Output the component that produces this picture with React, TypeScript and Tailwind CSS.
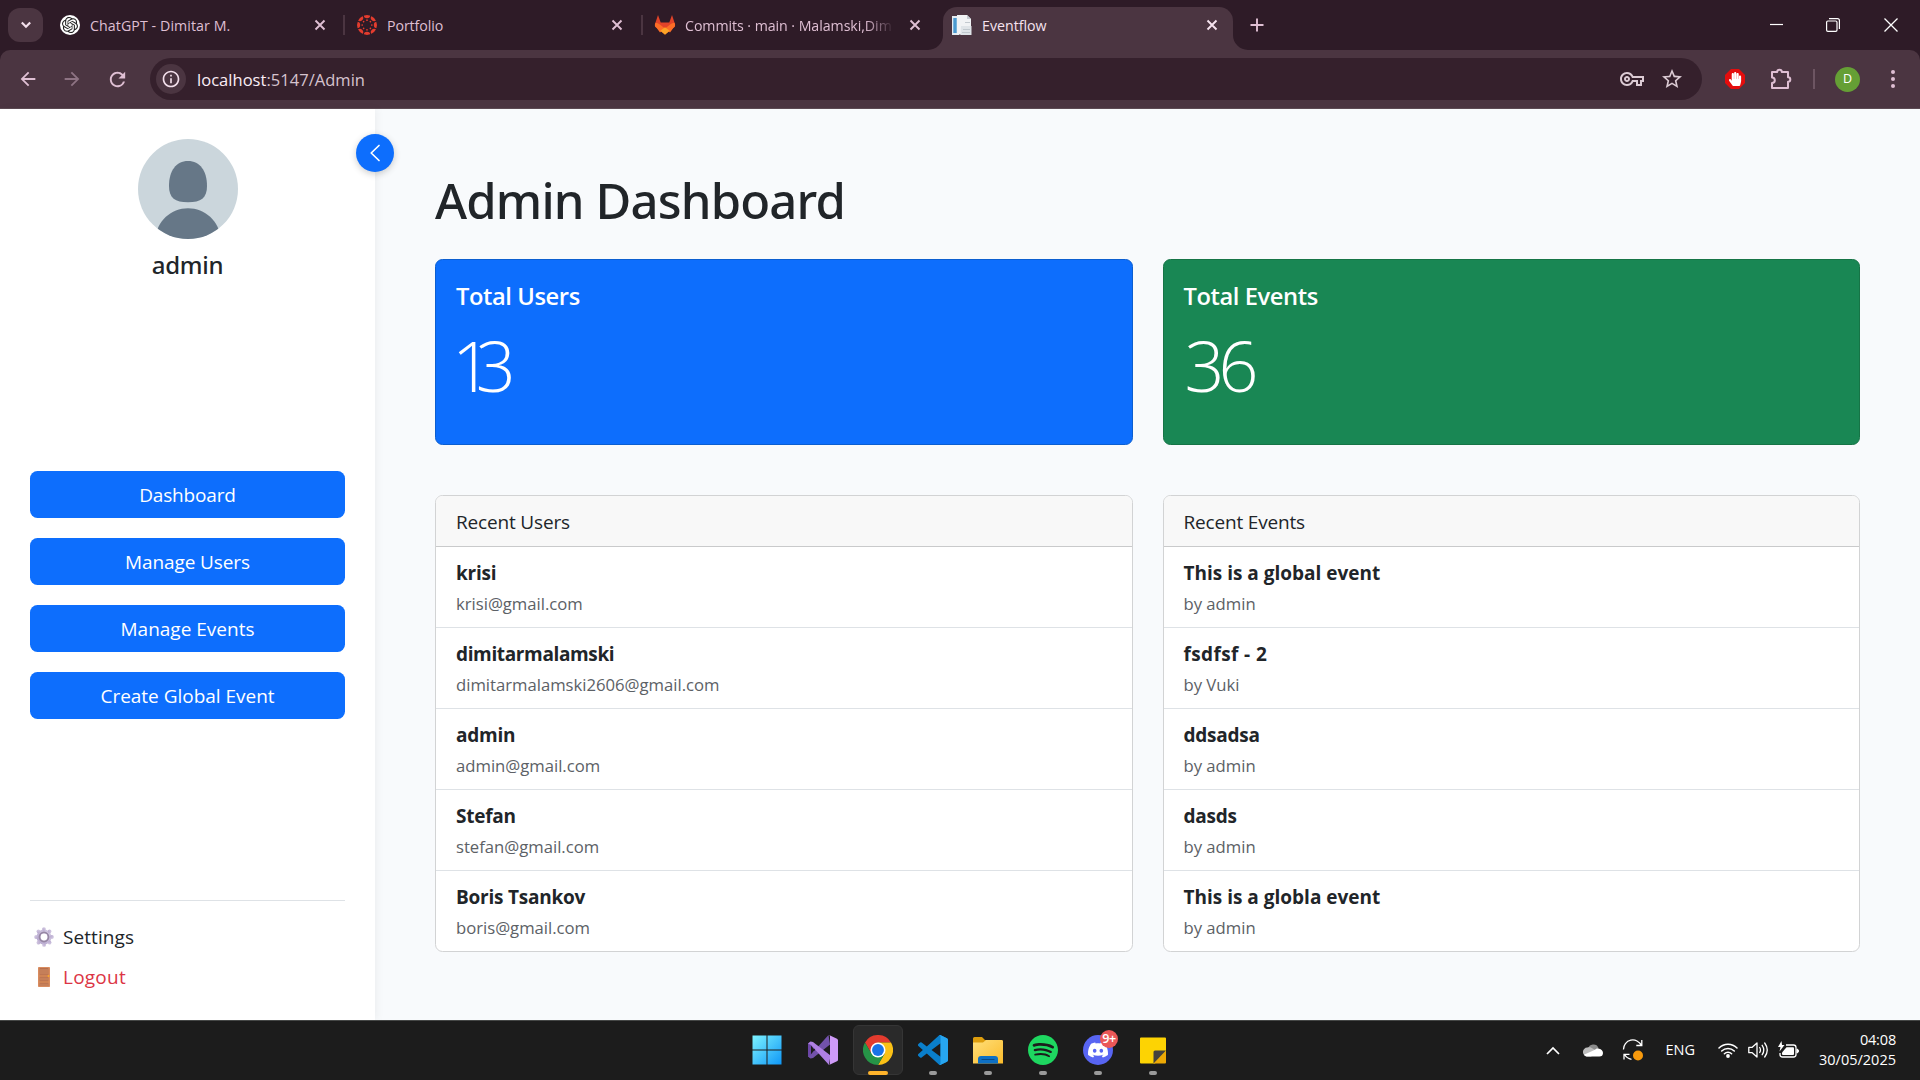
import React from "react";
import { SiOpenai, SiSpotify, SiDiscord } from "react-icons/si";
import { MdArrowBack, MdArrowForward, MdRefresh, MdInfoOutline, MdStarBorder, MdOutlineVpnKey } from "react-icons/md";
import { FaHandPaper } from "react-icons/fa";

/* ---------- Favicons ---------- */

function CanvasIcon() {
  const angles = [0, 45, 90, 135, 180, 225, 270, 315];
  return (
    <svg width="20" height="20" viewBox="0 0 20 20">
      <defs>
        <clipPath id="ring"><circle cx="10" cy="10" r="10" /></clipPath>
      </defs>
      <g fill="#e43c2e" clipPath="url(#ring)">
        {angles.map((a) => (
          <g key={a} transform={`rotate(${a} 10 10)`}>
            <circle cx="10" cy="0" r="3.2" />
            <circle cx="10" cy="5.2" r="0.85" />
          </g>
        ))}
      </g>
    </svg>
  );
}

function GitlabIcon() {
  return (
    <svg width="22" height="22" viewBox="0 0 22 22">
      <path d="M4 1 1.2 9.5a3.6 3.6 0 0 0 1.3 4.3L11 20.5l8.500-6.700a3.600 3.600 0 0 0 1.300-4.300L18 1l-2.700 7.500H6.700Z" fill="#e24329" />
      <path d="M20.500 8.800c-2 .2-3.600 1.200-5 2.300L11 14.500l5 3.900 3.500-4.600a3.600 3.600 0 0 0 1.300-4.300Z" fill="#fc6d26" />
      <path d="M1.500 8.800c2 .2 3.600 1.200 5 2.300L11 14.500l-5 3.900-3.500-4.600a3.600 3.600 0 0 1-1.300-4.300Z" fill="#fc6d26" />
      <path d="m6.300 16.800 4.700-3.600 4.700 3.600-4.700 3.900Z" fill="#fca326" />
    </svg>
  );
}

function EventflowIcon() {
  return (
    <svg width="20" height="20" viewBox="0 0 20 20">
      <rect x="0" y="1" width="7" height="19" fill="#e4ecf2" />
      <rect x="1.300" y="3" width="3.400" height="15" fill="#4b9ad0" />
      <path d="M5 0h10l4 4v15.500H5Z" fill="#f1f3f5" />
      <path d="M15 0l4 4h-4Z" fill="#c5ccd3" />
      <path d="M9 11h10.500v9H8.500Z" fill="#dfe4e8" />
      <path d="M11 14.500h7M10 17.500h8M13 7.500h5" stroke="#bcc4cb" strokeWidth="0.900" />
    </svg>
  );
}

/* ---------- Browser tabs ---------- */

function CloseX({ color }: { color: string }) {
  return (
    <svg width="12" height="12" viewBox="0 0 12 12" className="shrink-0">
      <path d="M1.500 1.500l9 9M10.500 1.500l-9 9" stroke={color} strokeWidth="1.900" />
    </svg>
  );
}

function TabStrip() {
  return (
    <div className="flex h-[50px] bg-[#2e1b27] text-[14.2px] leading-5 text-[#dfbfd3]">
      <div className="mt-2 ml-2 flex h-[34px] w-[35px] items-center justify-center rounded-xl bg-[#4b3541]">
        <svg width="12" height="8" viewBox="0 0 12 8"><path d="M1.800 1.500 6 5.700l4.200-4.200" fill="none" stroke="#f3dfeb" strokeWidth="2.200" /></svg>
      </div>
      <div className="ml-[17px] flex h-[50px] w-[285px] items-center">
        <div className="flex size-5 items-center justify-center rounded-full bg-white"><SiOpenai size={16} color="#222" /></div>
        <span className="ml-[10px] flex-1 pt-[2px] tracking-[0.006em]">ChatGPT - Dimitar M.</span>
        <CloseX color="#dfbfd3" />
        <div className="ml-[17px] h-5 w-[2px] bg-[#4b3541]" />
      </div>
      <div className="ml-[12px] flex h-[50px] w-[286px] items-center">
        <CanvasIcon />
        <span className="ml-[10px] flex-1 pt-[2px] tracking-[-0.006em]">Portfolio</span>
        <CloseX color="#dfbfd3" />
        <div className="ml-[18px] h-5 w-[2px] bg-[#4b3541]" />
      </div>
      <div className="ml-[11px] flex h-[50px] w-[289px] items-center">
        <GitlabIcon />
        <div className="ml-[9px] w-[209px] overflow-hidden pt-[2px] whitespace-nowrap tracking-[-0.004em] [mask-image:linear-gradient(to_right,black_86%,transparent)]">
          Commits · main · Malamski,Dim
        </div>
        <div className="ml-[15px] flex"><CloseX color="#dfbfd3" /></div>
      </div>
      <div className="-ml-[15px] flex h-[50px] items-end">
        <svg width="15" height="15" viewBox="0 0 15 15"><path d="M15 0v15H0A15 15 0 0 0 15 0Z" fill="#4b3541" /></svg>
        <div className="flex h-[43px] w-[290px] items-center rounded-t-[14px] bg-[#4b3541] pb-[7px] pl-[9px] text-[#f6e3ef]">
          <EventflowIcon />
          <span className="ml-[10px] w-[224px] pt-[2px]">Eventflow</span>
          <CloseX color="#f6e3ef" />
        </div>
        <svg width="15" height="15" viewBox="0 0 15 15"><path d="M0 0v15h15A15 15 0 0 1 0 0Z" fill="#4b3541" /></svg>
      </div>
      <div className="ml-[2px] flex h-[50px] items-center">
        <svg width="14" height="14" viewBox="0 0 14 14"><path d="M7 .5v13M.5 7h13" stroke="#dfbfd3" strokeWidth="1.900" /></svg>
      </div>
      <div className="ml-auto flex h-[50px] items-center pr-[22px]">
        <svg width="13" height="13" viewBox="0 0 13 13"><path d="M0 5.500h13" stroke="#fff" strokeWidth="1.200" /></svg>
        <svg width="14" height="14" viewBox="0 0 14 14" className="ml-[43px]">
          <rect x="0.600" y="3" width="10.400" height="10.400" rx="1.300" fill="none" stroke="#fff" strokeWidth="1.200" />
          <path d="M3 .7h8.500a1.900 1.900 0 0 1 1.900 1.900V11" fill="none" stroke="#fff" strokeWidth="1.200" />
        </svg>
        <svg width="14" height="14" viewBox="0 0 14 14" className="ml-[44px]"><path d="M.5.5l13 13M13.500.5l-13 13" stroke="#fff" strokeWidth="1.300" /></svg>
      </div>
    </div>
  );
}

function Toolbar() {
  return (
    <div className="bg-[#2e1b27]">
      <div className="flex h-[59px] items-center rounded-t-[10px] border-b border-[#5c4a53] bg-[#4b3541] text-[#dfbfd3]">
        <MdArrowBack size={22} className="ml-[17px]" />
        <MdArrowForward size={22} className="ml-[22px] opacity-45" />
        <MdRefresh size={23} className="ml-[23px]" />
        <div className="ml-[21px] flex h-[42px] w-[1552px] items-center rounded-full bg-[#35202c] pl-[6px]">
          <div className="flex size-[30px] items-center justify-center rounded-full bg-[#4b3541]">
            <MdInfoOutline size={20} color="#f3dfeb" />
          </div>
          <span className="ml-[11px] pt-px text-[16.5px] leading-6 tracking-[0.002em] text-[#d6c3ce]">
            <span className="text-[#fbeef6]">localhost</span>:5147/Admin
          </span>
          <div className="ml-auto flex items-center pr-[18px] text-[#dccbd4]">
            <MdOutlineVpnKey size={24} />
            <MdStarBorder size={24} className="ml-[16px]" />
          </div>
        </div>
        <div className="ml-[23px] flex size-5 items-center justify-center bg-[#e40d0d] [clip-path:polygon(30%_0,70%_0,100%_30%,100%_70%,70%_100%,30%_100%,0_70%,0_30%)]">
          <FaHandPaper size={14} color="#fff" />
        </div>
        <svg width="22" height="22" viewBox="0 0 22 22" className="ml-[25px]">
          <path d="M2 4h5.200a2.300 2.300 0 0 1 4.600 0H18v5.200a2.300 2.300 0 0 1 0 4.600V20H2v-5a2.800 2.800 0 0 0 0-5.600Z" fill="none" stroke="#dfbfd3" strokeWidth="2" strokeLinejoin="round" />
        </svg>
        <div className="ml-[21px] h-5 w-[2px] bg-[#6d5562]" />
        <div className="ml-[20px] flex size-[25px] items-center justify-center rounded-full bg-[#659f35] text-[12.5px] leading-none text-white">D</div>
        <svg width="4" height="18" viewBox="0 0 4 18" className="ml-[31px]" fill="#dfbfd3">
          <circle cx="2" cy="2" r="2" /><circle cx="2" cy="9" r="2" /><circle cx="2" cy="16" r="2" />
        </svg>
      </div>
    </div>
  );
}

/* ---------- Sidebar ---------- */

function Avatar() {
  return (
    <svg width="100" height="100" viewBox="0 0 100 100">
      <defs><clipPath id="face"><circle cx="50" cy="50" r="50" /></clipPath></defs>
      <g clipPath="url(#face)">
        <rect width="100" height="100" fill="#cbd6dc" />
        <path d="M50 22C62 22 69 32 69 47C69 59 63 63.300 50 63.300S31 59 31 47C31 32 38 22 50 22Z" fill="#667787" />
        <path d="M17 100C19 82 33 69.300 50 69.300S81 82 83 100Z" fill="#667787" />
      </g>
    </svg>
  );
}

function GearIcon() {
  return (
    <svg width="20" height="20" viewBox="0 0 20 20">
      <defs>
        <linearGradient id="gear" x1="1" y1="0" x2="0" y2="1"><stop offset="0" stopColor="#d9d0e6" /><stop offset="1" stopColor="#b3a3cb" /></linearGradient>
      </defs>
      <g fill="url(#gear)">
        <circle cx="10" cy="10" r="7.500" />
        {[0, 45, 90, 135, 180, 225, 270, 315].map((a) => (
          <circle key={a} cx="10" cy="2.100" r="1.900" transform={`rotate(${a} 10 10)`} />
        ))}
      </g>
      <circle cx="10" cy="10" r="4.400" fill="none" stroke="#9787a5" strokeWidth="2" />
      <circle cx="10" cy="10" r="3.400" fill="#fff" />
    </svg>
  );
}

function DoorIcon() {
  return (
    <svg width="12" height="20" viewBox="0 0 12 20">
      <rect width="12" height="20" rx="0.800" fill="#d98c5f" />
      <rect x="1.200" y="1" width="9.600" height="18" fill="#c57f59" />
      <path d="M2 1.500h8M2 8h8M2 10h8M2 14h8M2 16h8" stroke="#b46a49" strokeWidth="0.800" />
      <path d="M1 9h10M1 15h10" stroke="#e08f56" strokeWidth="1.100" />
      <circle cx="10.500" cy="9" r="0.900" fill="#f9a825" />
    </svg>
  );
}

function Sidebar() {
  const items = [
    { label: "Dashboard", track: "tracking-[-0.008em]" },
    { label: "Manage Users", track: "tracking-[-0.005em]" },
    { label: "Manage Events", track: "tracking-normal" },
    { label: "Create Global Event", track: "tracking-[-0.001em]" },
  ];
  return (
    <aside className="relative z-10 flex h-full w-[375px] shrink-0 flex-col bg-white px-[30px] pt-[30px] pb-[23px] shadow-[2px_0_8px_rgba(0,0,0,0.05)]">
      <div className="flex flex-col items-center">
        <Avatar />
        <div className="mt-[11px] font-['Noto_Sans',sans-serif] text-[24px] leading-[30px] font-medium tracking-[-0.012em]">admin</div>
      </div>
      <nav className="mt-[191px] flex flex-col gap-5">
        {items.map((i) => (
          <a key={i.label} className={`flex h-[47px] items-center justify-center rounded-[7.500px] bg-[#0d6efd] text-[19px] leading-[30px] text-white ${i.track}`}>{i.label}</a>
        ))}
      </nav>
      <div className="mt-auto border-t border-[#dee2e6] pt-4 text-[19px]">
        <div className="flex h-10 items-center">
          <div className="flex w-[27px] justify-center"><GearIcon /></div>
          <span className="ml-[6px] tracking-[0.004em]">Settings</span>
        </div>
        <div className="flex h-10 items-center text-[#dc3545]">
          <div className="flex w-[27px] justify-center"><DoorIcon /></div>
          <span className="ml-[6px] tracking-[0.012em]">Logout</span>
        </div>
      </div>
      <div className="absolute top-[25px] -right-[19px] flex size-[38px] items-center justify-center rounded-full bg-[#0d6efd] shadow-[0_2px_7px_rgba(0,0,0,0.2)]">
        <svg width="12" height="18" viewBox="0 0 12 18"><path d="M10 1.500 2.200 9l7.800 7.500" fill="none" stroke="#fff" strokeWidth="1.700" strokeLinecap="round" strokeLinejoin="round" /></svg>
      </div>
    </aside>
  );
}

/* ---------- Main content ---------- */

const users = [
  { name: "krisi", sub: "krisi@gmail.com", track: "tracking-[-0.013em]" },
  { name: "dimitarmalamski", sub: "dimitarmalamski2606@gmail.com", track: "tracking-[-0.019em]" },
  { name: "admin", sub: "admin@gmail.com", track: "tracking-[-0.013em]" },
  { name: "Stefan", sub: "stefan@gmail.com", track: "tracking-[-0.013em]" },
  { name: "Boris Tsankov", sub: "boris@gmail.com", track: "tracking-[-0.012em]" },
];

const events = [
  { name: "This is a global event", sub: "by admin", track: "tracking-normal" },
  { name: "fsdfsf - 2", sub: "by Vuki", track: "tracking-[0.02em]" },
  { name: "ddsadsa", sub: "by admin", track: "tracking-[-0.012em]" },
  { name: "dasds", sub: "by admin", track: "tracking-[-0.012em]" },
  { name: "This is a globla event", sub: "by admin", track: "tracking-normal" },
];

function Stat({ title, value, color, valueClass }: { title: string; value: string; color: string; valueClass: string }) {
  return (
    <div className={`h-[186px] rounded-[7.500px] border px-5 pt-[21px] text-white ${color}`}>
      <div className="text-[23.7px] leading-[30px] font-semibold tracking-[-0.017em]">{title}</div>
      <div className={`mt-[12px] text-[70px] leading-[84px] font-light ${valueClass}`}>{value}</div>
    </div>
  );
}

function ListCard({ title, rows }: { title: string; rows: { name: string; sub: string; track: string }[] }) {
  return (
    <div className="overflow-hidden rounded-[7.500px] border border-[#d2d3d4] bg-white">
      <div className="flex h-[51px] items-center border-b border-[#c9cacb] bg-[#f8f8f8] px-5 pt-[2px] text-[19px] tracking-[-0.009em]">{title}</div>
      <div className="divide-y divide-[#dee2e6]">
        {rows.map((r, i) => (
          <div key={i} className="box-content h-20 px-5">
            <div className={`pt-[11px] text-[19px] leading-[30px] font-bold ${r.track}`}>{r.name}</div>
            <div className="text-[16.700px] leading-8 tracking-[-0.001em] text-[#5c6166]">{r.sub}</div>
          </div>
        ))}
      </div>
    </div>
  );
}

function Main() {
  return (
    <main className="flex-1 px-[60px] pt-[61px]">
      <h1 className="h-[60px] font-['Noto_Sans',sans-serif] text-[49px] leading-[60px] font-medium tracking-[-0.017em]">Admin Dashboard</h1>
      <div className="mt-[29px] grid grid-cols-2 gap-[30px]">
        <Stat title="Total Users" value="13" color="border-[#0b5ed0] bg-[#0d6efd]" valueClass="-ml-[4px] tracking-[-0.23em]" />
        <Stat title="Total Events" value="36" color="border-[#167446] bg-[#198754]" valueClass="ml-px tracking-[-0.085em]" />
      </div>
      <div className="mt-[50px] grid grid-cols-2 gap-[30px]">
        <ListCard title="Recent Users" rows={users} />
        <ListCard title="Recent Events" rows={events} />
      </div>
    </main>
  );
}

/* ---------- Taskbar ---------- */

function WindowsLogo() {
  return (
    <svg width="30" height="30" viewBox="0 0 30 30">
      <defs>
        <linearGradient id="win" x1="0" y1="0" x2="1" y2="1"><stop offset="0" stopColor="#7df3ff" /><stop offset="1" stopColor="#0f97f7" /></linearGradient>
      </defs>
      <path d="M.5.500h14v14H.5ZM15.500.500h14v14h-14ZM.5 15.500h14v14H.5ZM15.500 15.500h14v14h-14Z" fill="url(#win)" />
    </svg>
  );
}

function VisualStudioLogo() {
  return (
    <svg width="30" height="30" viewBox="0 0 30 30">
      <path d="M0 8.500 3 6.800 6 9v12l-3 2.200L0 21.500Z" fill="#6b45a5" />
      <path d="M3 10.500 6.500 15 3 19.500Z" fill="#1c1c1c" />
      <path d="M20.500 0 22 9.500 5 23 2.500 23.500 0 21.500 3 19.500Z" fill="#7252aa" />
      <path d="M0 8.500 2.500 6.500 5 7 22.500 20.500 21 30 3 10Z" fill="#ae7fe2" />
      <path d="M21 0l8 3.700a2 2 0 0 1 1 1.800v19a2 2 0 0 1-1 1.800L21 30c1-.5 1-1.300 1-2V2c0-.8 0-1.500-1-2Z" fill="#cf9bf8" />
    </svg>
  );
}

function ChromeLogo() {
  return (
    <svg width="30" height="30" viewBox="0 0 48 48">
      <path d="M3.200 12a24 24 0 0 1 41.600 0H24L13.600 30Z" fill="#e33b2e" />
      <path d="M44.800 12A24 24 0 0 1 24 48l10.400-18L24 12Z" fill="#fbc116" />
      <path d="M24 48A24 24 0 0 1 3.200 12l10.400 18h20.800Z" fill="#269447" />
      <circle cx="24" cy="24" r="12" fill="#fff" />
      <circle cx="24" cy="24" r="9.500" fill="#1a73e8" />
    </svg>
  );
}

function VsCodeLogo() {
  return (
    <svg width="30" height="30" viewBox="0 0 24 24">
      <path d="M23.150 2.587 18.210.21a1.494 1.494 0 0 0-1.705.29l-9.460 8.630-4.120-3.128a.999.999 0 0 0-1.276.057L.327 7.261A1 1 0 0 0 .326 8.740L3.899 12 .326 15.260a1 1 0 0 0 .001 1.479L1.650 17.940a.999.999 0 0 0 1.276.057l4.120-3.128 9.460 8.630a1.492 1.492 0 0 0 1.704.290l4.942-2.377A1.500 1.500 0 0 0 24 20.060V3.939a1.500 1.500 0 0 0-.850-1.352zm-5.146 14.861L10.826 12l7.178-5.448v10.896z" fill="#0a7fcb" />
      <path d="M18.210.21 23.150 2.587A1.500 1.500 0 0 1 24 3.939V20.060a1.500 1.500 0 0 1-.85 1.350L18.210 23.790a1.500 1.500 0 0 1-1.300.05c.7-.1 1.100-.6 1.100-1.300V1.460c0-.7-.4-1.200-1.100-1.300a1.500 1.500 0 0 1 1.300.05Z" fill="#27a6f0" />
    </svg>
  );
}

function FolderLogo() {
  return (
    <svg width="30" height="30" viewBox="0 0 30 30">
      <defs>
        <linearGradient id="fold" x1="0" y1="0" x2="1" y2="1"><stop offset="0" stopColor="#ffdf7a" /><stop offset="1" stopColor="#fbbb2b" /></linearGradient>
      </defs>
      <path d="M0 3.500A1.500 1.500 0 0 1 1.500 2H9l3 3h16.500A1.500 1.500 0 0 1 30 6.500V12H0Z" fill="#dd9d0d" />
      <path d="M0 7.500h10L13 5h15.500A1.500 1.500 0 0 1 30 6.500V28.500H0Z" fill="url(#fold)" />
      <path d="M5 28.500V24a3 3 0 0 1 3-3h14a3 3 0 0 1 3 3v4.500Z" fill="#0e70c4" />
      <path d="M9 24.500h12" stroke="#0a4a85" strokeWidth="1.200" strokeLinecap="round" />
    </svg>
  );
}

function StickyNotesLogo() {
  return (
    <svg width="30" height="30" viewBox="0 0 30 30">
      <path d="M2 3.500A1 1 0 0 1 3 2.500h24a1 1 0 0 1 1 1V17L17 28.500H3a1 1 0 0 1-1-1Z" fill="#fdd303" />
      <path d="M28 16v11.500a1 1 0 0 1-1 1H15Z" fill="#eda905" />
      <path d="M28 15.500 15.500 28.500V17a1.500 1.500 0 0 1 1.500-1.500Z" fill="#45423d" />
    </svg>
  );
}

function TaskItem({ children, bar }: { children: React.ReactNode; bar?: string }) {
  return (
    <div className="relative flex h-[58px] w-[55px] items-center justify-center">
      {children}
      {bar && <div className={`absolute bottom-[4px] h-1 rounded-full ${bar}`} />}
    </div>
  );
}

function Taskbar() {
  const idle = "w-2 bg-[#9a9a9a]";
  return (
    <footer className="relative z-20 flex h-[60px] border-t border-[#454746] bg-[#1c1c1c] text-[14.5px] leading-5 text-white">
      <div className="ml-[739px] flex">
        <TaskItem><WindowsLogo /></TaskItem>
        <div className="ml-px flex">
          <TaskItem><VisualStudioLogo /></TaskItem>
          <TaskItem bar="w-5 bg-[#feb32b]">
            <div className="flex size-[50px] items-center justify-center rounded-md border border-[#353535] bg-[#2a2a2a]"><ChromeLogo /></div>
          </TaskItem>
          <TaskItem bar={idle}><VsCodeLogo /></TaskItem>
          <TaskItem bar={idle}><FolderLogo /></TaskItem>
          <TaskItem bar={idle}><SiSpotify size={30} color="#1ed760" /></TaskItem>
          <TaskItem bar={idle}>
            <div className="flex size-[30px] items-center justify-center rounded-full bg-[#5865f2]"><SiDiscord size={20} color="#fff" /></div>
            <div className="absolute top-[9px] left-[30px] flex size-[18px] items-center justify-center rounded-full bg-[#eb5757] text-[12.5px] leading-none font-semibold tracking-tight">9+</div>
          </TaskItem>
          <TaskItem bar={idle}><StickyNotesLogo /></TaskItem>
        </div>
      </div>
      <div className="ml-auto flex h-[58px] items-center pr-6">
        <svg width="14" height="9" viewBox="0 0 14 9"><path d="m1 8 6-6 6 6" fill="none" stroke="#fff" strokeWidth="1.700" /></svg>
        <svg width="20" height="14" viewBox="0 0 20 14" className="ml-[23px]">
          <path d="M5 6a5.500 5.500 0 0 1 10.500-1L12 9Z" fill="#8b8b8b" />
          <path d="M4.500 13.500A4.400 4.400 0 0 1 4.300 4.600c2.500-.8 4.200 0 5.700 1.200l6 3-8 4.700Z" fill="#bdbdbd" />
          <path d="M4.500 13.500c-1.500 0-2.800-.7-3.600-1.800L12 6.800c1-1.200 2.700-1.600 4.200-1 2.100.6 3.800 2 3.800 4.200a3.600 3.600 0 0 1-3.600 3.500Z" fill="#fff" />
        </svg>
        <svg width="22" height="22" viewBox="0 0 22 22" className="ml-[19px]">
          <path d="M1.500 10.500A9.300 9.300 0 0 1 19.300 6.500M19.800 1v5.500H14.300M9.500 20.300a9.500 9.500 0 0 1-7-5M2 20.500V15.300h5.500" fill="none" stroke="#fff" strokeWidth="1.300" />
          <circle cx="16" cy="16.500" r="5" fill="#f89a0d" />
        </svg>
        <span className="ml-[22px]">ENG</span>
        <svg width="20" height="16" viewBox="0 0 20 16" className="ml-[23px]">
          <g fill="none" stroke="#fff" strokeWidth="1.500" strokeLinecap="round">
            <path d="M1 6a12.700 12.700 0 0 1 18 0M3.700 9a8.900 8.900 0 0 1 12.600 0M6.400 11.700a5.100 5.100 0 0 1 7.200 0" />
          </g>
          <circle cx="10" cy="14" r="1.900" fill="#fff" />
        </svg>
        <svg width="20" height="18" viewBox="0 0 20 18" className="ml-[10px]">
          <g fill="none" stroke="#fff" strokeWidth="1.300" strokeLinejoin="round" strokeLinecap="round">
            <path d="M.8 6.300h3.400L9 2v14l-4.800-4.300H.8ZM11.700 6.500c1 1.600 1 3.400 0 5M14.200 4.300c2 3 2 6.400 0 9.400M16.700 2c3.300 4.500 3.300 9.500 0 14" />
          </g>
        </svg>
        <svg width="21" height="18" viewBox="0 0 21 18" className="ml-[10px]">
          <path d="M8 4h7.500A2.500 2.500 0 0 1 18 6.500v7a2.500 2.500 0 0 1-2.500 2.500h-11A2.500 2.500 0 0 1 2 13.500V12" fill="none" stroke="#fff" strokeWidth="1.300" />
          <path d="M8.500 6.200H15a1 1 0 0 1 1 1V13a1 1 0 0 1-1 1H5a1 1 0 0 1-1-1v-1.500Z" fill="#fff" />
          <path d="M19 8v4a2 2 0 0 0 1.500-2A2 2 0 0 0 19 8Z" fill="#fff" stroke="#fff" />
          <path d="M3.500 0 0 6h2.500L1.500 10.500 6.500 4H4Z" fill="#fff" />
        </svg>
        <div className="ml-[20px] pb-px text-right">
          <div className="tracking-[-0.012em]">04:08</div>
          <div>30/05/2025</div>
        </div>
      </div>
    </footer>
  );
}

export default function App() {
  return (
    <div className="flex h-[1080px] w-[1920px] flex-col overflow-hidden bg-[#f8fafc] font-['Open_Sans','Noto_Sans',sans-serif] text-[#212529]">
      <TabStrip />
      <Toolbar />
      <div className="flex h-[911px]">
        <Sidebar />
        <Main />
      </div>
      <Taskbar />
    </div>
  );
}
